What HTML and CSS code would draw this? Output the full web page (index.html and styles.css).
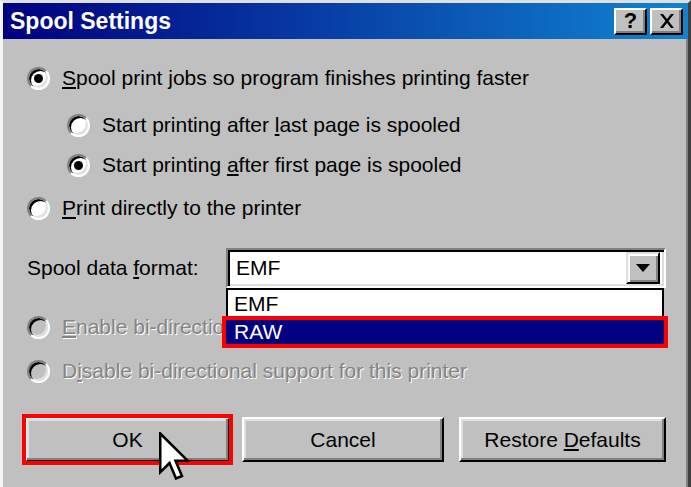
FILE: index.html
```html
<!DOCTYPE html>
<html>
<head>
    <title>Spool Settings</title>
    <link rel="stylesheet" href="styles.css">
</head>
<body>
    <div class="window">
        <div class="titlebar">
            <span class="title">Spool Settings</span>
            <div class="title-buttons">
                <span class="tbtn">?</span>
                <span class="tbtn">
                    <svg width="16" height="14" viewBox="0 0 16 14">
                        <path d="M1 0 L4 0 L8 5 L12 0 L15 0 L9.5 7 L15 14 L12 14 L8 9 L4 14 L1 14 L6.5 7 Z" fill="#000"/>
                    </svg>
                </span>
            </div>
        </div>

        <div class="client">
            <div class="row row-1">
                <span class="radio checked"></span>
                <span class="label"><u>S</u>pool print jobs so program finishes printing faster</span>
            </div>
            <div class="row row-2 indent">
                <span class="radio"></span>
                <span class="label">Start printing after <u>l</u>ast page is spooled</span>
            </div>
            <div class="row row-3 indent">
                <span class="radio checked"></span>
                <span class="label">Start printing <u>a</u>fter first page is spooled</span>
            </div>
            <div class="row row-4">
                <span class="radio"></span>
                <span class="label"><u>P</u>rint directly to the printer</span>
            </div>

            <div class="row combo-row">
                <span class="label format-label">Spool data <u>f</u>ormat:</span>
                <div class="combo">
                    <span class="combo-value">EMF</span>
                    <span class="combo-arrow">
                        <svg width="14" height="8" viewBox="0 0 14 8"><path d="M0 0 L14 0 L7 8 Z" fill="#000"/></svg>
                    </span>
                    <!-- open list, drawn over the label below it -->
                    <div class="combo-list">
                        <div class="combo-item first">EMF</div>
                        <div class="combo-item selected">RAW</div>
                    </div>
                </div>
            </div>

            <div class="row row-5 disabled">
                <span class="radio"></span>
                <span class="label"><u>E</u>nable bi-directional support for this printer</span>
            </div>
            <div class="row row-6 disabled">
                <span class="radio"></span>
                <span class="label">D<u>i</u>sable bi-directional support for this printer</span>
            </div>

            <div class="buttons">
                <button class="btn btn-ok">OK</button>
                <button class="btn btn-cancel">Cancel</button>
                <button class="btn btn-restore">Restore <u>D</u>efaults</button>
                <svg class="cursor" width="30" height="48" viewBox="0 0 12 19">
                    <path d="M0.5 0.5 L0.5 16 L4.2 12.3 L6.8 18.5 L9.2 17.5 L6.6 11.4 L11.5 11.4 Z" fill="#fff" stroke="#000" stroke-width="1" stroke-linejoin="miter"/>
                </svg>
            </div>
        </div>
    </div>
</body>
</html>
```

FILE: styles.css
```css
body {
    margin: 0;
    padding: 0;
    background: #c0c0c0;
    font-family: "Liberation Sans", Arial, sans-serif;
    font-size: 21px;
    color: #000;
}

.window {
    box-sizing: border-box;
    width: 691px;
    height: 487px;
    overflow: hidden;
    background: #c0c0c0;
    border-top: 3px solid #dfdfdf;
    border-left: 3px solid #f4f4f4;
    border-right: 3px solid #404040;
    box-shadow: inset -2px 0 0 #808080;
}

/* title bar */
.titlebar {
    height: 36px;
    display: flex;
    align-items: center;
    justify-content: space-between;
    padding: 0 5px 0 7px;
    background: linear-gradient(to right, #000080, #1084d0);
}

.title {
    color: #fff;
    font-weight: bold;
    font-size: 23px;
}

.title-buttons {
    display: flex;
    gap: 3px;
}

.tbtn {
    box-sizing: border-box;
    width: 33px;
    height: 27px;
    display: flex;
    align-items: center;
    justify-content: center;
    background: #c0c0c0;
    border-top: 2px solid #fff;
    border-left: 2px solid #fff;
    border-right: 2px solid #000;
    border-bottom: 2px solid #000;
    box-shadow: inset -2px -2px 0 #808080;
    font-weight: bold;
    font-size: 22px;
}

/* dialog body */
.client {
    padding-left: 24px;
}

.row {
    height: 40px;
    display: flex;
    align-items: center;
}

.row-1 { margin-top: 19px; }
.row-2 { margin-top: 7px; }
.row-3 { margin-top: 0; }
.row-4 { margin-top: 3px; }
.combo-row { margin-top: 20px; }
.row-5 { margin-top: 19px; }
.row-6 { margin-top: 4px; }

.indent {
    padding-left: 40px;
}

.radio {
    box-sizing: border-box;
    position: relative;
    width: 23px;
    height: 23px;
    flex: none;
    border-radius: 50%;
    background: #fff;
    border: 2px solid;
    border-color: #808080 #fff #fff #808080;
    box-shadow: inset 2px 2px 0 #000, inset -2px -2px 0 #dfdfdf;
    margin-right: 12px;
}

.radio.checked::after {
    content: "";
    position: absolute;
    left: 5px;
    top: 5px;
    width: 9px;
    height: 9px;
    border-radius: 50%;
    background: #000;
}

.disabled .radio {
    background: #c0c0c0;
}

.disabled .label {
    color: #848484;
    text-shadow: 1px 1px 0 #fff;
}

.format-label {
    width: 199px;
    flex: none;
}

/* combo box */
.combo {
    box-sizing: border-box;
    position: relative;
    width: 440px;
    height: 40px;
    display: flex;
    align-items: center;
    justify-content: space-between;
    background: #fff;
    border: 2px solid;
    border-color: #808080 #fff #fff #808080;
    box-shadow: inset 2px 2px 0 #000, inset -2px -2px 0 #dfdfdf;
    padding: 2px 4px 2px 8px;
}

.combo-arrow {
    box-sizing: border-box;
    width: 34px;
    height: 32px;
    display: flex;
    align-items: center;
    justify-content: center;
    background: #c0c0c0;
    border-top: 2px solid #dfdfdf;
    border-left: 2px solid #dfdfdf;
    border-right: 2px solid #000;
    border-bottom: 2px solid #000;
    box-shadow: inset 2px 2px 0 #fff, inset -2px -2px 0 #808080;
}

.combo-list {
    box-sizing: border-box;
    position: absolute;
    left: -2px;
    top: 38px;
    width: 438px;
    height: 58px;
    background: #fff;
    border: 2px solid #000;
    padding-top: 2px;
    z-index: 2;
}

.combo-item {
    height: 24px;
    line-height: 24px;
    padding-left: 6px;
}

.combo-item.first {
    overflow: hidden;
}

.combo-item.selected {
    margin: 4px -2px 0 -2px;
    padding-left: 8px;
    background: #000080;
    color: #fff;
    outline: 4px solid #ff0000;
    position: relative;
}

/* buttons */
.buttons {
    position: relative;
    display: flex;
    margin-top: 26px;
    margin-left: -2px;
}

.btn {
    box-sizing: border-box;
    height: 45px;
    font-family: "Liberation Sans", Arial, sans-serif;
    font-size: 21px;
    color: #000;
    background: #c0c0c0;
    border-top: 2px solid #fff;
    border-left: 2px solid #fff;
    border-right: 2px solid #000;
    border-bottom: 2px solid #000;
    box-shadow: inset -2px -2px 0 #808080, inset 2px 2px 0 #dfdfdf;
    padding: 0;
}

.btn-ok {
    width: 205px;
    outline: 4px solid #ff0000;
    outline-offset: -1px;
}

.btn-cancel {
    width: 202px;
    margin-left: 12px;
}

.btn-restore {
    width: 207px;
    margin-left: 15px;
}

.cursor {
    position: absolute;
    left: 134px;
    top: 15px;
}
```
